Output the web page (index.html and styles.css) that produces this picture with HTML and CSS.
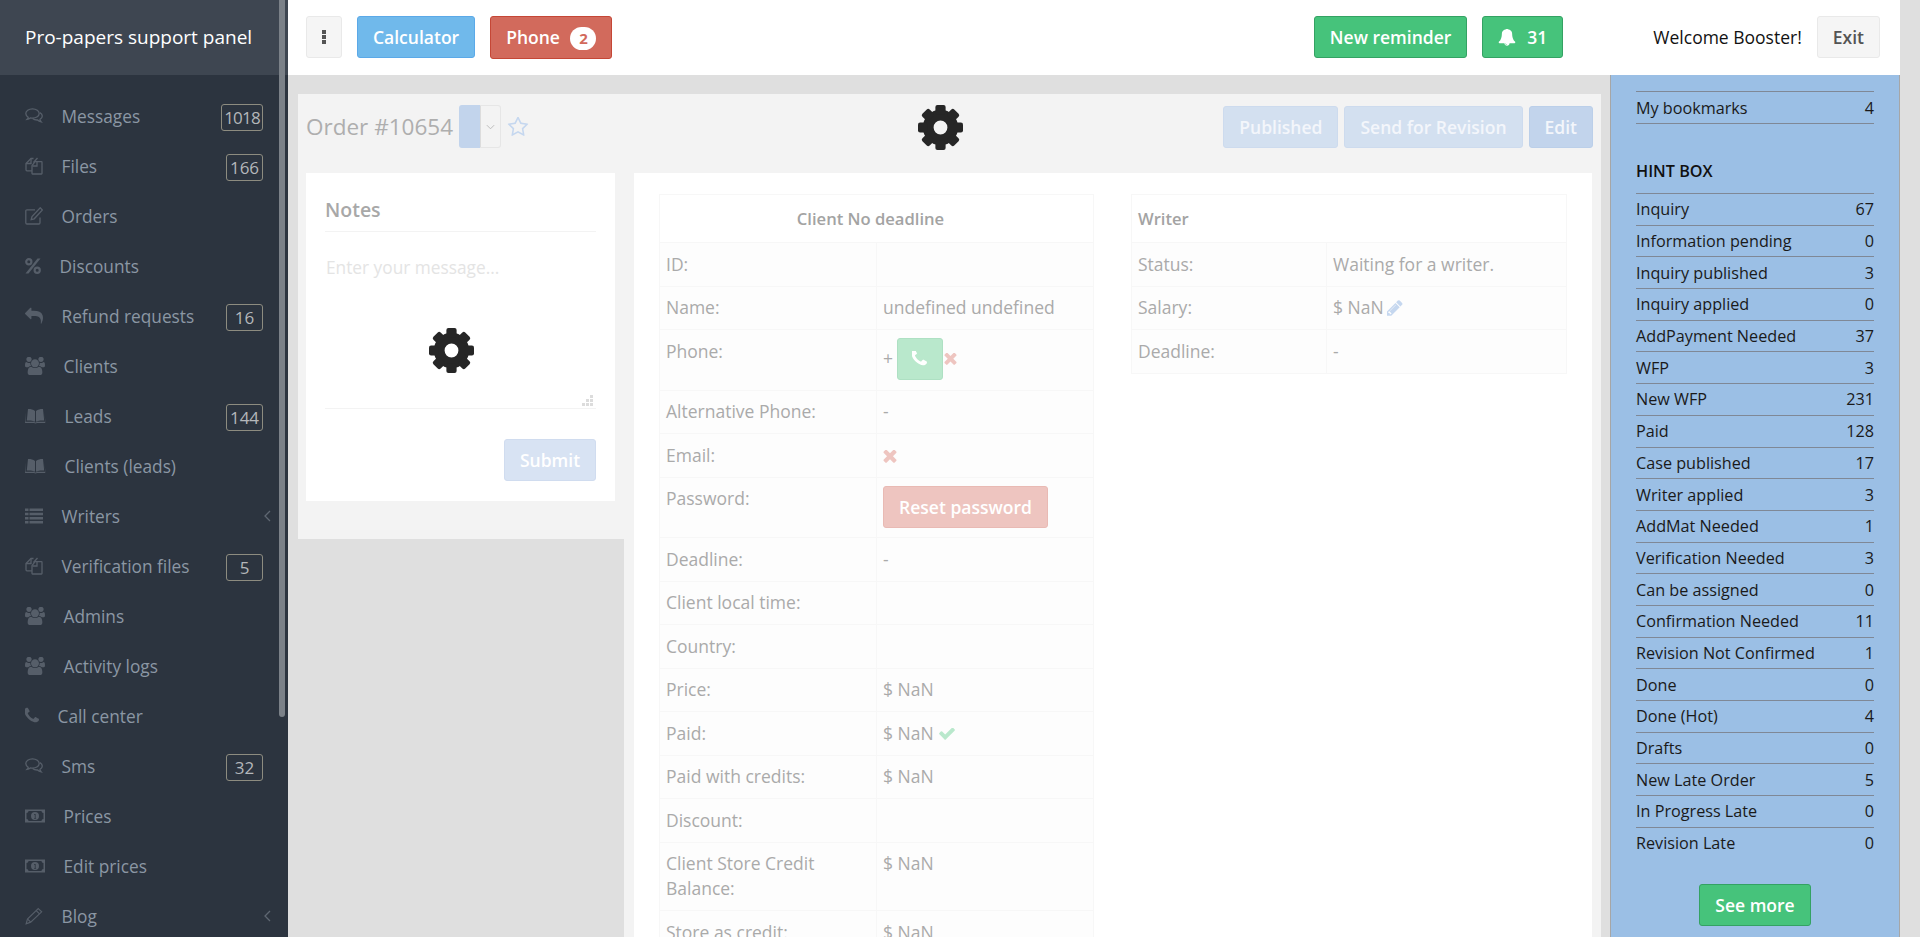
FILE: index.html
```html
<!DOCTYPE HTML>
<html>
  <head>
    <meta http-equiv="Content-type" content="text/html;charset=UTF-8">
    <title>Pro-papers support panel</title>
    <link rel="stylesheet" href="styles.css">
  </head>
  <body>
    <!-- icon sprite -->
    <svg class="sprite">
      <symbol id="i-comments" viewBox="0 0 18 16"><path d="M7.5 .8C3.7 .8 .8 2.9 .8 5.6c0 1.5.9 2.8 2.4 3.7-.2.9-.6 1.5-1.1 2 1.3-.2 2.4-.7 3.2-1.4.7.1 1.4.2 2.2.2 3.8 0 6.7-2.1 6.7-4.5S11.3.8 7.5.8z" fill="none" stroke="currentColor" stroke-width="1.3"/><path d="M14.8 4.6c1.6.8 2.5 2 2.5 3.4 0 1.400-.9 2.600-2.300 3.400.1.9.5 1.700 1.200 2.500-1.500-.3-2.800-1-3.600-1.900-2 .1-3.800-.4-5-1.400" fill="none" stroke="currentColor" stroke-width="1.300"/></symbol>
      <symbol id="i-files" viewBox="0 0 18 18"><path d="M8.500 1.500H6L1 6.500v6.300c0 .6.400 1 1 1h5" fill="none" stroke="currentColor" stroke-width="1.300"/><path d="M6 1.500v5H1" fill="none" stroke="currentColor" stroke-width="1.300"/><path d="M12.500 4.700H10L7 8.700v7.800c0 .3.200.5.500.5h9c.3 0 .5-.2.500-.5V5.200c0-.3-.2-.5-.5-.5z" fill="none" stroke="currentColor" stroke-width="1.300"/><path d="M12.500 1l-4 4.500M12 5v4H7.500" fill="none" stroke="currentColor" stroke-width="1.300"/></symbol>
      <symbol id="i-edit" viewBox="0 0 18 18"><path d="M15 10.500v5.200c0 .8-.5 1.300-1.200 1.300H2c-.6 0-1.200-.5-1.200-1.300V4c0-.7.500-1.200 1.200-1.200h8" fill="none" stroke="currentColor" stroke-width="1.300"/><path d="M15.200 .8l2.200 2.200-8.200 8.800-3 .8.800-3z" fill="none" stroke="currentColor" stroke-width="1.300"/></symbol>
      <symbol id="i-percent" viewBox="0 0 16 16"><circle cx="3.800" cy="3.800" r="2.600" fill="none" stroke="currentColor" stroke-width="2.200"/><circle cx="12.200" cy="12.200" r="2.600" fill="none" stroke="currentColor" stroke-width="2.200"/><path d="M12.500 .5h3L3.500 15.500h-3z" fill="currentColor"/></symbol>
      <symbol id="i-reply" viewBox="0 0 1792 1792"><path d="M1792 1120q0 166-127 451-3 7-10.500 24t-13.500 30-13 22q-12 17-28 17-15 0-23.500-10t-8.500-25q0-9 2.500-26.500t2.500-23.500q5-68 5-123 0-101-17.500-181t-48.500-138.500-80-101-105.500-69.500-133-42.500-154-21.500-175.500-6h-224v256q0 26-19 45t-45 19-45-19l-512-512q-19-19-19-45t19-45l512-512q19-19 45-19t45 19 19 45v256h224q713 0 875 403 53 134 53 333z" fill="currentColor"/></symbol>
      <symbol id="i-users" viewBox="0 128 1920 1536"><path d="M593 896q-162 5-265 128h-134q-82 0-138-40.500t-56-118.500q0-353 124-353 6 0 43.500 21t97.500 42.500 119 21.500q67 0 133-23-5 37-5 66 0 139 81 256zm1071 637q0 120-73 189.500t-194 69.500h-874q-121 0-194-69.500t-73-189.500q0-53 3.500-103.500t14-109 26.500-108.500 43-97.500 62-81 85.500-53.500 111.500-20q10 0 43 21.500t73 48 107 48 135 21.500 135-21.500 107-48 73-48 43-21.500q61 0 111.500 20t85.500 53.500 62 81 43 97.500 26.500 108.500 14 109 3.500 103.500zm-1024-1277q0 106-75 181t-181 75-181-75-75-181 75-181 181-75 181 75 75 181zm704 384q0 159-112.500 271.500t-271.500 112.500-271.500-112.500-112.500-271.500 112.500-271.500 271.500-112.500 271.500 112.500 112.500 271.500zm576 225q0 78-56 118.500t-138 40.500h-134q-103-123-265-128 81-117 81-256 0-29-5-66 66 23 133 23 59 0 119-21.500t97.500-42.500 43.500-21q124 0 124 353zm-128-609q0 106-75 181t-181 75-181-75-75-181 75-181 181-75 181 75 75 181z" fill="currentColor"/></symbol>
      <symbol id="i-book" viewBox="0 0 21 15"><path d="M10 2.500C8 1 5.500.5 3 .6L1.800 12c2.800-.3 5.800 0 8.200 1.200zM11 2.500c2-1.500 4.500-2 7-1.900L19.200 12c-2.800-.3-5.800 0-8.200 1.200z" fill="currentColor"/><path d="M.6 13.300h8.400c.5.800 2.500.8 3 0h8.400l-1-9.500.9 10.800H12c-.6.500-2.400.5-3 0H0L.9 3.800z" fill="currentColor"/></symbol>
      <symbol id="i-list" viewBox="0 0 18 15"><path d="M0 0h3.500v2.500H0zM4.500 0H18v2.500H4.500zM0 4.200h3.500v2.500H0zM4.500 4.200H18v2.500H4.500zM0 8.400h3.500v2.500H0zM4.500 8.400H18v2.500H4.500zM0 12.500h3.500V15H0zM4.500 12.500H18V15H4.500z" fill="currentColor"/></symbol>
      <symbol id="i-phone" viewBox="256 256 1344 1344"><path d="M1600 1240q0 27-10 70.500t-21 68.500q-21 50-122 106-94 51-186 51-27 0-53-3.500t-57.500-12.500-47-14.500-55.500-20.500-49-18q-98-35-175-83-127-79-264-216t-216-264q-48-77-83-175-3-9-18-49t-20.500-55.500-14.500-47-12.500-57.500-3.500-53q0-92 51-186 56-101 106-122 25-11 68.500-21t70.500-10q14 0 21 3 18 6 53 76 11 19 30 54t35 63.500 31 53.500q3 4 17.500 25t21.500 35.500 7 28.500q0 20-28.500 50t-62 55-62 53-28.500 46q0 9 5 22.500t8.500 20.500 14 24 11.500 19q76 137 174 235t235 174q2 1 19 11.500t24 14 20.500 8.500 22.500 5q18 0 46-28.500t53-62 55-62 50-28.500q14 0 28.500 7t35.500 21.500 25 17.500q25 15 53.500 31t63.500 35 54 30q70 35 76 53 3 7 3 21z" fill="currentColor"/></symbol>
      <symbol id="i-money" viewBox="0 0 20 13"><path fill-rule="evenodd" d="M0 0h20v13H0zM3.500 1.500c0 1.200-.9 2-2 2v6c1.100 0 2 .8 2 2h13c0-1.200.9-2 2-2v-6c-1.100 0-2-.8-2-2zM10 2.500a4 4 0 1 1 0 8 4 4 0 0 1 0-8zM9.200 4.500v1h.6v3h-.7v.8h2v-.8h-.5V4.500z" fill="currentColor"/></symbol>
      <symbol id="i-pen-line" viewBox="0 0 19 18"><path d="M14 1.200l3.600 3.400L6 15.500l-4.800 1.700 1.400-5z" fill="none" stroke="currentColor" stroke-width="1.200"/><path d="M11.800 3.400l3.600 3.400M2.800 12.200l3.200 3.200" fill="none" stroke="currentColor" stroke-width="1.200"/></symbol>
      <symbol id="i-angle" viewBox="0 0 7 12"><path d="M6 1L1 6l5 5" fill="none" stroke="currentColor" stroke-width="1.300"/></symbol>
      <symbol id="i-gear" viewBox="0 0 44 44"><circle cx="22" cy="22" r="12" fill="none" stroke="currentColor" stroke-width="10.500"/><g fill="currentColor"><rect x="17" y="0" width="10" height="9" rx="2"/><rect x="17" y="0" width="10" height="9" rx="2" transform="rotate(45 22 22)"/><rect x="17" y="0" width="10" height="9" rx="2" transform="rotate(90 22 22)"/><rect x="17" y="0" width="10" height="9" rx="2" transform="rotate(135 22 22)"/><rect x="17" y="0" width="10" height="9" rx="2" transform="rotate(180 22 22)"/><rect x="17" y="0" width="10" height="9" rx="2" transform="rotate(225 22 22)"/><rect x="17" y="0" width="10" height="9" rx="2" transform="rotate(270 22 22)"/><rect x="17" y="0" width="10" height="9" rx="2" transform="rotate(315 22 22)"/></g></symbol>
      <symbol id="i-bell" viewBox="0 128 1792 1664"><path d="M912 1696q0-16-16-16-59 0-101.500-42.500t-42.500-101.500q0-16-16-16t-16 16q0 73 51.500 124.500t124.500 51.500q16 0 16-16zm816-288q0 52-38 90t-90 38h-448q0 106-75 181t-181 75-181-75-75-181h-448q-52 0-90-38t-38-90q50-42 91-88t85-119.500 74.500-158.500 50-206 19.500-260q0-152 117-282.500t307-158.500q-8-19-8-39 0-40 28-68t68-28 68 28 28 68q0 20-8 39 190 28 307 158.500t117 282.500q0 139 19.500 260t50 206 74.500 158.500 85 119.500 91 88z" fill="currentColor"/></symbol>
      <symbol id="i-star" viewBox="0 128 1792 1536"><path d="M1201 1004l306-297-422-62-189-382-189 382-422 62 306 297-73 421 378-199 377 199zm527-357q0 22-26 48l-363 354 86 500q1 7 1 20 0 50-41 50-19 0-40-12l-449-236-449 236q-22 12-40 12-21 0-31.500-14.500t-10.500-35.500q0-6 2-20l86-500-364-354q-25-27-25-48 0-37 56-46l502-73 225-455q19-41 49-41t49 41l225 455 502 73q56 9 56 46z" fill="currentColor"/></symbol>
      <symbol id="i-times" viewBox="256 384 1280 1280"><path d="M1490 1322q0 40-28 68l-136 136q-28 28-68 28t-68-28l-294-294-294 294q-28 28-68 28t-68-28l-136-136q-28-28-28-68t28-68l294-294-294-294q-28-28-28-68t28-68l136-136q28-28 68-28t68 28l294 294 294-294q28-28 68-28t68 28l136 136q28 28 28 68t-28 68l-294 294 294 294q28 28 28 68z" fill="currentColor"/></symbol>
      <symbol id="i-check" viewBox="121 370 1550 1184"><path d="M1671 566q0 40-28 68l-724 724-136 136q-28 28-68 28t-68-28l-136-136-362-362q-28-28-28-68t28-68l136-136q28-28 68-28t68 28l294 295 656-657q28-28 68-28t68 28l136 136q28 28 28 68z" fill="currentColor"/></symbol>
      <symbol id="i-pencil" viewBox="128 128 1568 1568"><path d="M491 1536l91-91-235-235-91 91v107h128v128h107zm523-928q0-22-22-22-10 0-17 7l-542 542q-7 7-7 17 0 22 22 22 10 0 17-7l542-542q7-7 7-17zm-54-192l416 416-832 832h-416v-416zm683 96q0 53-37 90l-166 166-416-416 166-165q36-38 90-38 53 0 91 38l235 234q37 39 37 91z" fill="currentColor"/></symbol>
    </svg>

    <div class="app">
      <aside class="sidebar">
        <div class="brand">Pro-papers support panel</div>
        <nav class="nav">
          <a class="nav-item"><svg class="ico w18"><use href="#i-comments"/></svg><span>Messages</span><b class="badge wide">1018</b></a>
          <a class="nav-item"><svg class="ico w18"><use href="#i-files"/></svg><span>Files</span><b class="badge">166</b></a>
          <a class="nav-item"><svg class="ico w18"><use href="#i-edit"/></svg><span>Orders</span></a>
          <a class="nav-item"><svg class="ico w16"><use href="#i-percent"/></svg><span>Discounts</span></a>
          <a class="nav-item"><svg class="ico w18"><use href="#i-reply"/></svg><span>Refund requests</span><b class="badge">16</b></a>
          <a class="nav-item"><svg class="ico w20"><use href="#i-users"/></svg><span>Clients</span></a>
          <a class="nav-item"><svg class="ico w21"><use href="#i-book"/></svg><span>Leads</span><b class="badge">144</b></a>
          <a class="nav-item"><svg class="ico w21"><use href="#i-book"/></svg><span>Clients (leads)</span></a>
          <a class="nav-item"><svg class="ico w18"><use href="#i-list"/></svg><span>Writers</span><svg class="angle"><use href="#i-angle"/></svg></a>
          <a class="nav-item"><svg class="ico w18"><use href="#i-files"/></svg><span>Verification files</span><b class="badge">5</b></a>
          <a class="nav-item"><svg class="ico w20"><use href="#i-users"/></svg><span>Admins</span></a>
          <a class="nav-item"><svg class="ico w20"><use href="#i-users"/></svg><span>Activity logs</span></a>
          <a class="nav-item"><svg class="ico w14"><use href="#i-phone"/></svg><span>Call center</span></a>
          <a class="nav-item"><svg class="ico w18"><use href="#i-comments"/></svg><span>Sms</span><b class="badge">32</b></a>
          <a class="nav-item"><svg class="ico w20"><use href="#i-money"/></svg><span>Prices</span></a>
          <a class="nav-item"><svg class="ico w20"><use href="#i-money"/></svg><span>Edit prices</span></a>
          <a class="nav-item"><svg class="ico w18"><use href="#i-pen-line"/></svg><span>Blog</span><svg class="angle"><use href="#i-angle"/></svg></a>
        </nav>
        <div class="thumb"></div>
      </aside>

      <div class="right">
        <header class="topbar">
          <button class="btn btn-default kebab"><i></i><i></i><i></i></button>
          <button class="btn btn-info">Calculator</button>
          <button class="btn btn-danger">Phone <span class="pill">2</span></button>
          <div class="top-right">
            <button class="btn btn-success">New reminder</button>
            <button class="btn btn-success bell"><svg class="bell-ico"><use href="#i-bell"/></svg>31</button>
            <span class="welcome">Welcome Booster!</span>
            <button class="btn btn-default">Exit</button>
          </div>
        </header>

        <div class="under">
          <main class="main">
            <div class="order-head">
              <h1>Order #10654</h1>
              <div class="split"><span class="split-l"></span><span class="split-r"><svg class="caret" viewBox="0 0 10 6"><path d="M1 1l4 4 4-4" fill="none" stroke="currentColor"/></svg></span></div>
              <svg class="star"><use href="#i-star"/></svg>
              <div class="head-btns">
                <button class="btn dim">Published</button>
                <button class="btn dim">Send for Revision</button>
                <button class="btn dim2">Edit</button>
              </div>
              <svg class="gear gear-head"><use href="#i-gear"/></svg>
            </div>

            <div class="columns">
              <div class="col-left">
                <section class="notes">
                  <h2>Notes</h2>
                  <textarea class="note-input" placeholder="Enter your message..."></textarea>
                  <svg class="grip" viewBox="0 0 11 11"><path d="M8 0h3v3H8zM4 4h3v3H4zM8 4h3v3H8zM0 8h3v3H0zM4 8h3v3H4zM8 8h3v3H8z" fill="currentColor"/></svg>
                  <div class="note-foot"><button class="btn submit">Submit</button></div>
                  <svg class="gear gear-notes"><use href="#i-gear"/></svg>
                </section>
              </div>
              <div class="col-right">
                <section class="details">
                  <table class="info">
                    <colgroup><col class="col-client"><col></colgroup>
                    <tr><th colspan="2" class="center">Client No deadline</th></tr>
                    <tr><td>ID:</td><td></td></tr>
                    <tr><td>Name:</td><td>undefined undefined</td></tr>
                    <tr><td>Phone:</td><td>+ <button class="btn call"><svg class="call-ico"><use href="#i-phone"/></svg></button><svg class="cross"><use href="#i-times"/></svg></td></tr>
                    <tr><td>Alternative Phone:</td><td>-</td></tr>
                    <tr><td>Email:</td><td><svg class="cross solo"><use href="#i-times"/></svg></td></tr>
                    <tr><td>Password:</td><td><button class="btn reset">Reset password</button></td></tr>
                    <tr><td>Deadline:</td><td>-</td></tr>
                    <tr><td>Client local time:</td><td></td></tr>
                    <tr><td>Country:</td><td></td></tr>
                    <tr><td>Price:</td><td>$ NaN</td></tr>
                    <tr><td>Paid:</td><td>$ NaN <svg class="tick"><use href="#i-check"/></svg></td></tr>
                    <tr><td>Paid with credits:</td><td>$ NaN</td></tr>
                    <tr><td>Discount:</td><td></td></tr>
                    <tr><td>Client Store Credit<br>Balance:</td><td>$ NaN</td></tr>
                    <tr><td>Store as credit:</td><td>$ NaN</td></tr>
                  </table>
                  <table class="info">
                    <colgroup><col class="col-writer"><col></colgroup>
                    <tr><th colspan="2">Writer</th></tr>
                    <tr><td>Status:</td><td>Waiting for a writer.</td></tr>
                    <tr><td>Salary:</td><td>$ NaN <svg class="pen"><use href="#i-pencil"/></svg></td></tr>
                    <tr><td>Deadline:</td><td>-</td></tr>
                  </table>
                </section>
              </div>
            </div>
          </main>

          <aside class="hints">
            <div class="hint-row first"><span>My bookmarks</span><span>4</span></div>
            <h3>HINT BOX</h3>
            <div class="hint-row"><span>Inquiry</span><span>67</span></div>
            <div class="hint-row"><span>Information pending</span><span>0</span></div>
            <div class="hint-row"><span>Inquiry published</span><span>3</span></div>
            <div class="hint-row"><span>Inquiry applied</span><span>0</span></div>
            <div class="hint-row"><span>AddPayment Needed</span><span>37</span></div>
            <div class="hint-row"><span>WFP</span><span>3</span></div>
            <div class="hint-row"><span>New WFP</span><span>231</span></div>
            <div class="hint-row"><span>Paid</span><span>128</span></div>
            <div class="hint-row"><span>Case published</span><span>17</span></div>
            <div class="hint-row"><span>Writer applied</span><span>3</span></div>
            <div class="hint-row"><span>AddMat Needed</span><span>1</span></div>
            <div class="hint-row"><span>Verification Needed</span><span>3</span></div>
            <div class="hint-row"><span>Can be assigned</span><span>0</span></div>
            <div class="hint-row"><span>Confirmation Needed</span><span>11</span></div>
            <div class="hint-row"><span>Revision Not Confirmed</span><span>1</span></div>
            <div class="hint-row"><span>Done</span><span>0</span></div>
            <div class="hint-row"><span>Done (Hot)</span><span>4</span></div>
            <div class="hint-row"><span>Drafts</span><span>0</span></div>
            <div class="hint-row"><span>New Late Order</span><span>5</span></div>
            <div class="hint-row"><span>In Progress Late</span><span>0</span></div>
            <div class="hint-row"><span>Revision Late</span><span>0</span></div>
            <div class="hint-foot"><button class="btn btn-success">See more</button></div>
          </aside>
        </div>
      </div>
    </div>
  </body>
</html>
```

FILE: styles.css
```css
html, body {
  margin: 0;
  height: 100%;
  overflow: hidden;
  font-family: "Open Sans", sans-serif;
  font-size: 16px;
  background: #dfdfdf;
}
.sprite {
  display: none;
}
.app {
  display: flex;
  width: 1920px;
  height: 937px;
  overflow: hidden;
}

/* sidebar */
.sidebar {
  position: relative;
  flex: 0 0 288px;
  background: #2c343f;
  overflow: hidden;
}
.brand {
  height: 75px;
  line-height: 75px;
  padding-left: 25px;
  background: #3e4651;
  color: #fff;
  font-size: 19px;
}
.nav {
  padding: 16px 25px 0;
}
.nav-item {
  display: flex;
  align-items: center;
  gap: 18.5px;
  height: 50px;
  color: #8b97a4;
  font-size: 17.3px;
}
.ico {
  flex: none;
  height: 18px;
  color: #565e69;
}
.w14 { width: 14px; }
.w16 { width: 16px; }
.w18 { width: 18px; }
.w20 { width: 20px; }
.w21 { width: 21px; }
.badge {
  box-sizing: border-box;
  min-width: 37px;
  height: 27px;
  line-height: 26px;
  margin-left: auto;
  margin-top: 2px;
  border: 1px solid #8d8c80;
  border-radius: 3px;
  color: #b4b7ba;
  font-weight: 400;
  font-size: 17px;
  text-align: center;
}
.badge.wide {
  min-width: 42px;
  letter-spacing: -.8px;
}
.angle {
  width: 7px;
  height: 12px;
  margin-left: auto;
  margin-right: -8px;
  color: #5f6772;
}
.thumb {
  position: absolute;
  top: 0;
  left: 279px;
  width: 6px;
  height: 717px;
  border-radius: 0 0 3px 3px;
  background: #7b8188;
}

/* top bar */
.right {
  flex: 1;
  min-width: 0;
  display: flex;
  flex-direction: column;
}
.topbar {
  flex: none;
  display: flex;
  align-items: flex-start;
  gap: 15px;
  box-sizing: border-box;
  width: 1612px;
  height: 75px;
  padding: 16px 20px 0 18px;
  background: #fff;
}
.btn {
  box-sizing: border-box;
  height: 42px;
  padding: 0 15px;
  border: 1px solid transparent;
  border-radius: 3px;
  font-family: inherit;
  font-size: 17.5px;
  font-weight: 600;
  color: #fff;
}
.btn-default {
  background: #f5f5f5;
  border-color: #e9e9e9;
  color: #545454;
}
.btn-info {
  background: #70b9eb;
  border-color: #5ba9e8;
}
.btn-danger {
  height: 43px;
  background: #d26a5c;
  border-color: #c54736;
}
.btn-success {
  background: #46c37b;
  border-color: #34a263;
}
.kebab {
  display: flex;
  flex-direction: column;
  align-items: center;
  justify-content: center;
  gap: 1px;
  width: 36px;
  padding: 0;
}
.kebab i {
  width: 4px;
  height: 4px;
  background: #545454;
}
.pill {
  display: inline-block;
  width: 26px;
  height: 23px;
  line-height: 23px;
  margin-left: 6px;
  border-radius: 12px;
  background: #fff;
  color: #d26a5c;
  font-size: 15px;
  font-weight: 700;
}
.top-right {
  display: flex;
  align-items: center;
  gap: 15px;
  margin-left: auto;
}
.bell {
  display: flex;
  align-items: center;
  gap: 11px;
}
.bell-ico {
  width: 18px;
  height: 17px;
  color: #fff;
}
.welcome {
  margin-left: 75px;
  color: #111;
  font-size: 17.5px;
}

/* main panel */
.under {
  flex: 1;
  min-height: 0;
  display: flex;
  width: 1612px;
}
.main {
  flex: 1;
  min-width: 0;
  padding: 19px 9px 0 10px;
  overflow: hidden;
}
.order-head {
  position: relative;
  display: flex;
  align-items: center;
  height: 79px;
  padding: 11px 8px 25px 8px;
  box-sizing: border-box;
  background: #f3f3f3;
}
.order-head h1 {
  margin: 0 6px 0 0;
  color: #aeaeae;
  font-size: 22.5px;
  font-weight: 400;
}
.split {
  display: flex;
  width: 42px;
  height: 43px;
}
.split-l {
  width: 21px;
  background: #c2d4ec;
  border-radius: 3px 0 0 3px;
}
.split-r {
  flex: 1;
  display: flex;
  align-items: center;
  justify-content: center;
  border: 1px solid #e6e6e6;
  border-left-color: #dcdcdc;
  border-radius: 0 3px 3px 0;
  color: #b5b5b5;
}
.caret {
  width: 9px;
  height: 6px;
}
.star {
  width: 22px;
  height: 20px;
  margin-left: 6px;
  color: #c5d7ef;
}
.head-btns {
  display: flex;
  gap: 6px;
  margin-left: auto;
}
.dim {
  background: #d3e0f0;
  border-color: #cddbee;
  color: #f3f6fb;
}
.dim2 {
  background: #c2d4ec;
  border-color: #bbcfe9;
  color: #f3f6fb;
}
.gear {
  position: absolute;
  width: 45px;
  height: 45px;
  color: #262626;
}
.gear-head {
  left: 620px;
  top: 11px;
}
.columns {
  display: grid;
  grid-template-columns: 326px 977px;
  align-items: start;
}
.col-left {
  padding: 0 9px 38px 8px;
  background: #f3f3f3;
}
.col-right {
  height: 800px;
  padding: 0 9px 0 10px;
  background: #f3f3f3;
}

/* notes */
.notes {
  position: relative;
  box-sizing: border-box;
  height: 328px;
  padding: 20px 19px;
  background: #fff;
}
.notes h2 {
  margin: 0;
  padding-top: 1px;
  padding-bottom: 5px;
  border-bottom: 1px solid #f3f3f3;
  color: #a8a8a8;
  font-size: 19.5px;
  font-weight: 600;
  line-height: 32px;
}
.note-input {
  display: block;
  box-sizing: border-box;
  width: 100%;
  height: 177px;
  padding: 24px 1px;
  border: 0;
  border-bottom: 1px solid #f3f3f3;
  outline: 0;
  resize: none;
  font-family: inherit;
  font-size: 17.3px;
  background: #fff;
}
.note-input::placeholder {
  color: #e4e4e4;
}
.grip {
  position: absolute;
  left: 276px;
  top: 222px;
  width: 11px;
  height: 11px;
  color: #dcdcdc;
}
.note-foot {
  display: flex;
  justify-content: flex-end;
  margin-top: 30px;
}
.submit {
  width: 92px;
  padding: 0;
  background: #d8e3f3;
  border-color: #d0dcef;
}
.gear-notes {
  left: 123px;
  top: 155px;
}

/* order details */
.details {
  display: grid;
  grid-template-columns: 435px 436px;
  column-gap: 37px;
  align-items: start;
  height: 100%;
  padding: 21px 25px 0;
  background: #fff;
}
.info {
  width: 100%;
  border-collapse: collapse;
  table-layout: fixed;
  color: #aaa;
  font-size: 17.5px;
  line-height: 25px;
}
.col-client {
  width: 217px;
}
.col-writer {
  width: 195px;
}
.info th, .info td {
  padding: 8.75px 6px;
  border: 1px solid #f7f7f7;
  text-align: left;
  vertical-align: top;
}
.info td {
  background: #fdfdfd;
}
.info th {
  padding: 11px 6px 11px;
  color: #a3a3a3;
  font-size: 16.6px;
  font-weight: 600;
}
.info th.center {
  padding-right: 18px;
  text-align: center;
}
.call {
  width: 46px;
  margin: -1px 0 1px -1px;
  padding: 0;
  background: #b9e8cc;
  border-color: #aee0c3;
  vertical-align: middle;
}
.call-ico {
  display: block;
  width: 15px;
  height: 15px;
  margin: 0 auto;
  color: #fff;
}
.cross {
  width: 13px;
  height: 13px;
  margin-left: 1px;
  color: #eec5c0;
  vertical-align: middle;
}
.cross.solo {
  width: 14px;
  height: 14px;
  margin-left: 0;
}
.reset {
  width: 165px;
  padding: 0;
  background: #eec5c0;
  border-color: #e9bab4;
}
.tick {
  width: 16px;
  height: 12px;
  margin-left: 1px;
  color: #b9e8cc;
}
.pen {
  width: 16px;
  height: 16px;
  margin-left: -1px;
  color: #c5d7ef;
  vertical-align: -2px;
}

/* hint box */
.hints {
  flex: 0 0 290px;
  box-sizing: border-box;
  padding: 16px 25px 0;
  background: #9bbfe5;
  border-left: 1px solid #a6a6a6;
  border-right: 1px solid #a6a6a6;
  color: #1a1a1a;
  font-size: 16.2px;
}
.hint-row {
  display: flex;
  align-items: center;
  justify-content: space-between;
  box-sizing: border-box;
  height: 31.7px;
  border-top: 1px solid #7f8896;
}
.hint-row.first {
  height: 33px;
  border-bottom: 1px solid #7f8896;
}
.hints h3 {
  margin: 0;
  padding-top: 36px;
  height: 69px;
  box-sizing: border-box;
  color: #111;
  font-size: 16.2px;
  font-weight: 600;
}
.hint-foot {
  display: flex;
  justify-content: center;
  margin-top: 26px;
}
.hint-foot .btn {
  width: 112px;
  padding: 0;
}
```
